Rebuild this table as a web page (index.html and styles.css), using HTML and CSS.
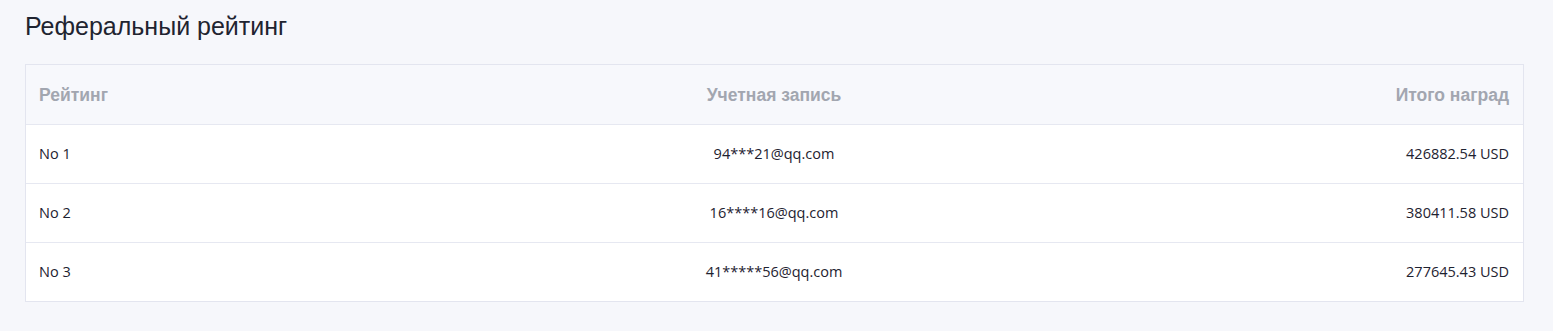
FILE: index.html
```html
<!DOCTYPE html>
<html lang="ru">
<head>
<meta charset="utf-8">
<title>Реферальный рейтинг</title>
<link rel="stylesheet" href="styles.css">
</head>
<body>
<div class="page">
  <h1 class="title">Реферальный рейтинг</h1>
  <div class="table">
    <div class="row head">
      <div class="cell left">Рейтинг</div>
      <div class="cell center">Учетная запись</div>
      <div class="cell right">Итого наград</div>
    </div>
    <div class="row">
      <div class="cell left">No 1</div>
      <div class="cell center">94***21@qq.com</div>
      <div class="cell right">426882.54 USD</div>
    </div>
    <div class="row">
      <div class="cell left">No 2</div>
      <div class="cell center">16****16@qq.com</div>
      <div class="cell right">380411.58 USD</div>
    </div>
    <div class="row last">
      <div class="cell left">No 3</div>
      <div class="cell center">41*****56@qq.com</div>
      <div class="cell right">277645.43 USD</div>
    </div>
  </div>
</div>
</body>
</html>
```

FILE: styles.css
```css
html, body {
  margin: 0;
  padding: 0;
  background: #f6f7fb;
}
.page {
  padding: 12px 29px 0 25px;
}
.title {
  margin: 0 0 24px 0;
  font-family: "Liberation Sans", Arial, sans-serif;
  font-weight: 400;
  font-size: 25px;
  line-height: 28px;
  color: #1f2430;
}
.table {
  border: 1px solid #e3e5ef;
  box-shadow: 0 1px 0 #eceef5;
  background: #fff;
}
.row {
  display: grid;
  grid-template-columns: 1fr 1fr 1fr;
  height: 58px;
  align-items: center;
  border-bottom: 1px solid #e6e8f1;
  font-family: "Open Sans", "Noto Sans", sans-serif;
  font-size: 14.5px;
  line-height: 20px;
  color: #1e2230;
}
.row.last {
  border-bottom: none;
}
.row.head {
  height: 59px;
  background: #f7f8fc;
  font-family: "Liberation Sans", Arial, sans-serif;
  font-weight: 700;
  font-size: 17.5px;
  color: #a2a6b0;
}
.cell {
  padding: 0 14px 0 13px;
}
.left { text-align: left; }
.center { text-align: center; }
.right { text-align: right; }
```
